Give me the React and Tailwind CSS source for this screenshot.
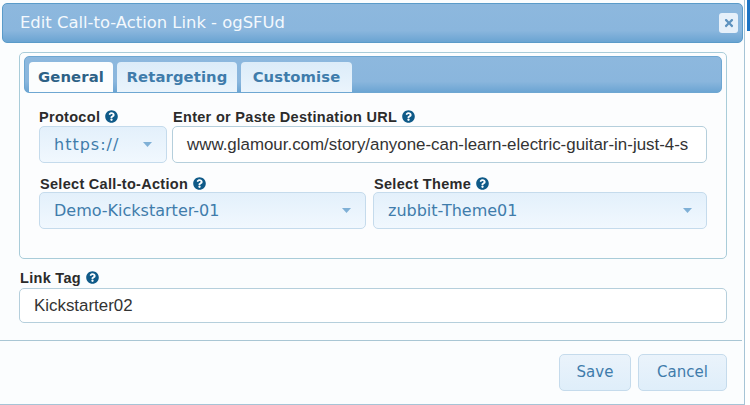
import { FaQuestionCircle, FaTimes } from 'react-icons/fa';

const sans = 'font-["Liberation_Sans",Arial,sans-serif]';
const lucida = 'font-["DejaVu_Sans",Verdana,sans-serif]';

function Help() {
  return <FaQuestionCircle className="inline-block ml-[5px] text-[#0f5a88] text-[13px] align-[-1px]" />;
}

function Label({ children, className = '' }) {
  return (
    <div className={`${sans} font-bold text-[14.5px] leading-[16px] tracking-[0.3px] text-[#2b2b2b] whitespace-nowrap ${className}`}>
      {children}
      <Help />
    </div>
  );
}

function Select({ value, className = '' }) {
  return (
    <div className={`h-[37px] flex items-center justify-between pl-[14px] pr-[14px] rounded-[5px] border border-[#c5dbec] bg-gradient-to-b from-[#e3f0fb] to-[#f1f8fe] ${lucida} text-[16px] text-[#3f7cab] ${className}`}>
      <span>{value}</span>
      <svg width="9" height="5" viewBox="0 0 9 5"><path d="M0 0h9L4.5 5z" fill="#7fb0d6" /></svg>
    </div>
  );
}

function Tab({ label, active, className = '' }) {
  return (
    <div className={`h-[30px] flex items-center justify-center rounded-t-[4px] ${lucida} font-bold text-[14.8px] tracking-[0.1px] ${active ? 'bg-[#fbfdfe] text-[#2d6186]' : 'bg-gradient-to-b from-[#dcecf9] to-[#eaf4fc] text-[#3f7cab]'} ${className}`}>
      {label}
    </div>
  );
}

export default function App() {
  return (
    <div className="w-[750px] h-[405px] bg-white overflow-hidden flex">
      <div className="w-[745px] h-[405px] shrink-0 border-r border-b border-[#a6c4d6] bg-[#fbfdfe] flex flex-col">
        {/* Titlebar */}
        <div className="ml-[2px] mr-[1px] mt-[3px] h-[40px] shrink-0 rounded-[5px] border border-[#5a9bc9] bg-gradient-to-b from-[#8db8de] via-[#8ab6dd] via-70% to-[#6aa4d2] flex items-center justify-between pl-[17px] pr-[4px]">
          <span className={`${lucida} text-[16.4px] text-[#f4f9fd]`}>Edit Call-to-Action Link - ogSFUd</span>
          <div className="w-[19px] h-[20px] rounded-[3px] bg-[#e6f0fa] flex items-center justify-center">
            <FaTimes className="text-[#5e92bf] text-[12px]" />
          </div>
        </div>

        {/* Tabs panel */}
        <div className="ml-[19px] w-[708px] h-[207px] mt-[9px] shrink-0 rounded-[5px] border border-[#a9ccd9] bg-[#fcfdfe] pt-[3px] px-[4px]">
          <div className="h-[37px] w-[698px] rounded-[5px] border border-[#6ea7d2] bg-gradient-to-b from-[#8db8de] via-[#8ab6dd] via-70% to-[#6ca5d3] flex items-end pl-[4px] gap-[4px]">
            <Tab label="General" active className="w-[84px]" />
            <Tab label="Retargeting" className="w-[120px]" />
            <Tab label="Customise" className="w-[111px]" />
          </div>
          <div className="pl-[15px] w-[683px]">
            <div className="flex gap-[5px] mt-[16px]">
              <div className="w-[128px]">
                <Label>Protocol</Label>
                <Select value="https://" className="mt-[1px] tracking-[1px]" />
              </div>
              <div className="w-[535px]">
                <Label className="ml-[1px]">Enter or Paste Destination URL</Label>
                <div className={`mt-[1px] h-[37px] flex items-center pl-[14px] rounded-[5px] border border-[#b5cfdc] bg-white ${sans} text-[16.9px] text-[#333] whitespace-nowrap overflow-hidden`}>
                  www.glamour.com/story/anyone-can-learn-electric-guitar-in-just-4-s
                </div>
              </div>
            </div>
            <div className="flex gap-[7px] mt-[13px]">
              <div className="w-[327px]">
                <Label className="ml-[1px]">Select Call-to-Action</Label>
                <Select value="Demo-Kickstarter-01" />
              </div>
              <div className="w-[334px]">
                <Label className="ml-[1px]">Select Theme</Label>
                <Select value="zubbit-Theme01" />
              </div>
            </div>
          </div>
        </div>

        {/* Link tag */}
        <div className="ml-[19px] w-[708px] mt-[11px]">
          <Label className="ml-[1px]">Link Tag</Label>
          <div className={`mt-[2px] h-[35px] flex items-center pl-[14px] rounded-[5px] border border-[#b5cfdc] bg-white ${sans} text-[16.9px] text-[#333]`}>
            Kickstarter02
          </div>
        </div>

        {/* Footer */}
        <div className="mt-[17px] border-t border-[#a9c6d4] flex justify-end gap-[7px] pt-[13px] pr-[15px] mr-[2px]">
          <button className={`w-[72px] h-[37px] rounded-[5px] border border-[#c5dbec] bg-gradient-to-b from-[#eaf3fb] to-[#dfeefa] ${lucida} text-[15px] text-[#3f7cab]`}>Save</button>
          <button className={`w-[89px] h-[37px] rounded-[5px] border border-[#c5dbec] bg-gradient-to-b from-[#eaf3fb] to-[#dfeefa] ${lucida} text-[15px] text-[#3f7cab]`}>Cancel</button>
        </div>
      </div>
      <div className="flex-1 h-[405px] bg-white">
        <div className="h-[31px] ml-[2px] bg-[#1d74c4]"></div>
      </div>
    </div>
  );
}
